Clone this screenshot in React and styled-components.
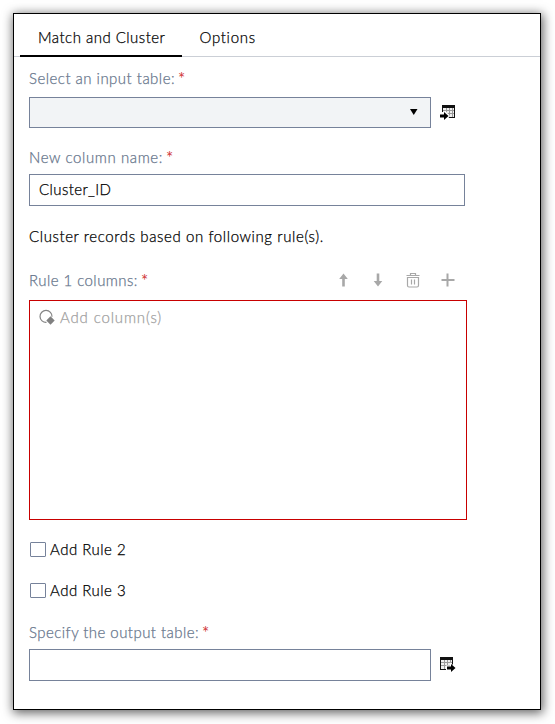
import React from "react";
import styled, { createGlobalStyle } from "styled-components";

const GlobalStyle = createGlobalStyle`
  * { box-sizing: border-box; }
  body { margin: 0; background: #fff; }
`;

const Page = styled.div`
  display: flex;
  align-items: flex-start;
  height: 724px;
  padding: 13px 0 0 13px;
  overflow: hidden;
`;

const Panel = styled.main`
  width: 528px;
  height: 697px;
  border: 1px solid #000;
  background: #fff;
  box-shadow: 1px 2px 10px 1px rgba(0, 0, 0, 0.62);
  font-family: Lato, "Open Sans", sans-serif;
  font-size: 15px;
  font-weight: 300;
  line-height: 20px;
  color: #000;
`;

const Tabs = styled.nav`
  display: flex;
  height: 43px;
  padding-left: 6px;
  box-shadow: inset 0 -1px #cbcfd6;
`;

const Tab = styled.button`
  width: ${(p) => p.$width}px;
  padding: 5px 0 0 ${(p) => p.$inset}px;
  border: 0;
  border-bottom: 2px solid ${(p) => (p.$active ? "#000" : "transparent")};
  background: none;
  font: inherit;
  color: inherit;
  text-align: left;
`;

const Form = styled.form`
  display: flex;
  flex-direction: column;
  padding: 11px 0 0 15px;
`;

const Text = styled.span`
  letter-spacing: ${(p) => p.$track || 0}px;
  white-space: nowrap;
  -webkit-text-stroke: 0.25px currentColor;
`;

const Label = styled.div`
  display: flex;
  align-items: center;
  gap: 3px;
  height: 20px;
  color: #66758b;
`;

const Star = styled.span`
  height: 20px;
  font-size: 17px;
  line-height: 22px;
  font-weight: 400;
  color: #d13a3a;
`;

const FieldRow = styled.div`
  display: flex;
  align-items: center;
  gap: 9px;
  margin: ${(p) => p.$margin};
`;

const Field = styled.div`
  display: flex;
  align-items: center;
  justify-content: ${(p) => (p.$select ? "flex-end" : "flex-start")};
  width: ${(p) => p.$width}px;
  height: ${(p) => (p.$select ? 31 : 32)}px;
  padding: 0 12px 2px 9px;
  border: 1px solid #76829a;
  background: ${(p) => (p.$select ? "#f2f4f6" : "#fff")};
`;

const Note = styled.p`
  margin: 0 0 24px;
`;

const RuleHeader = styled.div`
  display: flex;
  justify-content: space-between;
  width: 427px;
  height: 20px;
  margin-bottom: 10px;
`;

const Toolbar = styled.div`
  display: flex;
  align-items: center;
  gap: 19px;
`;

const ColumnsBox = styled.div`
  display: flex;
  align-items: flex-start;
  gap: 4px;
  width: 438px;
  height: 220px;
  padding: 6px 0 0 9px;
  margin-bottom: 19px;
  border: 1px solid #c80000;
  color: #a0a0a0;
`;

const Check = styled.label`
  display: flex;
  align-items: center;
  gap: 4px;
  height: 20px;
  padding-left: 1px;
  margin-bottom: ${(p) => p.$after}px;
`;

const Box = styled.span`
  width: 16px;
  height: 15px;
  margin-top: 1px;
  border: 1px solid #76829a;
  border-radius: 1px;
`;

const Icon = styled.svg`
  display: block;
  flex: none;
`;

const Required = ({ children, track }) => (
  <Label>
    <Text $track={track}>{children}</Text>
    <Star>*</Star>
  </Label>
);

const TableGrid = ({ x }) => (
  <g transform={`translate(${x} 0)`} shapeRendering="crispEdges">
    <path d="M0 1h13v13H0z" fill="#111" />
    <path d="M1 4h11v9H1z" fill="#eee" />
    <path d="M1 6.5h11M1 9.5h11M4.5 4v9M7.5 4v9M10.5 4v9" stroke="#999" fill="none" />
  </g>
);

const InputTableIcon = () => (
  <Icon width="16" height="16" viewBox="0 1 16 16">
    <TableGrid x={2} />
    <path d="M0 8h5V6.500l5 5.500-3 4H0z" fill="#fff" />
    <path d="M0 10.500h4V8l4.500 4-4.500 4v-2.500H0z" fill="#000" />
  </Icon>
);

const OutputTableIcon = () => (
  <Icon width="16" height="16" viewBox="0 1 16 16">
    <TableGrid x={0} />
    <path d="M6 9.500h4V6.500l5 4v4.500H6z" fill="#fff" />
    <path d="M7 10.500h4V8l4.500 4-4.500 4v-2.500H7z" fill="#000" />
  </Icon>
);

const ArrowIcon = ({ down }) => (
  <Icon width="16" height="16" viewBox="0 0 16 16">
    <path
      d="M8.500 1.500 12.800 7H9.800v7.500H7.200V7H4.200z"
      fill="#a8a8a8"
      transform={down ? "rotate(180 8.250 8)" : undefined}
    />
  </Icon>
);

const TrashIcon = () => (
  <Icon width="16" height="16" viewBox="0 0 16 16" fill="none" stroke="#a8a8a8">
    <path d="M1.500 3.500h13M5.500 3V1.500h5V3M2.500 5.500h11v8q0 1.500-1.500 1.500H4q-1.500 0-1.500-1.500zM6.500 7.500v5M9.500 7.500v5" strokeWidth="1.200" />
  </Icon>
);

const PlusIcon = () => (
  <Icon width="16" height="16" viewBox="0 0 16 16">
    <path d="M7.500 1.500v13M1.500 8h13" stroke="#a8a8a8" strokeWidth="2" />
  </Icon>
);

const ColumnIcon = () => (
  <Icon width="17" height="19" viewBox="0 -1 17 19">
    <path d="M7.500 14.400A6 6 0 1 1 13 8.800" fill="none" stroke="#858585" strokeWidth="1.200" />
    <path d="m11.500 8.300 4.200 4.200-4.200 4.200-4.200-4.200z" fill="#808080" />
  </Icon>
);

export default function App() {
  return (
    <>
      <GlobalStyle />
      <Page>
        <Panel>
          <Tabs>
            <Tab type="button" $active $width={162} $inset={18}>
              <Text $track={0.48}>Match and Cluster</Text>
            </Tab>
            <Tab type="button" $width={90} $inset={17.5}>
              <Text $track={0.7}>Options</Text>
            </Tab>
          </Tabs>
          <Form>
            <Required track={0.48}>Select an input table:</Required>
            <FieldRow $margin="9px 0 19px">
              <Field $select $width={402}>
                <Icon width="9" height="6" viewBox="0 0 9 6">
                  <path d="M1 0h7.500l-3.750 6z" fill="#000" />
                </Icon>
              </Field>
              <InputTableIcon />
            </FieldRow>
            <Required track={0.6}>New column name:</Required>
            <FieldRow $margin="7px 0 20px">
              <Field $width={436}>
                <Text $track={0.4}>Cluster_ID</Text>
              </Field>
            </FieldRow>
            <Note>
              <Text $track={0.6}>Cluster records based on following rule(s).</Text>
            </Note>
            <RuleHeader>
              <Required track={0.45}>Rule 1 columns:</Required>
              <Toolbar>
                <ArrowIcon />
                <ArrowIcon down />
                <TrashIcon />
                <PlusIcon />
              </Toolbar>
            </RuleHeader>
            <ColumnsBox>
              <ColumnIcon />
              <Text $track={0.85}>Add column(s)</Text>
            </ColumnsBox>
            <Check $after={21}>
              <Box />
              <Text $track={0.5}>Add Rule 2</Text>
            </Check>
            <Check $after={22}>
              <Box />
              <Text $track={0.5}>Add Rule 3</Text>
            </Check>
            <Required track={0.45}>Specify the output table:</Required>
            <FieldRow $margin="7px 0 0">
              <Field $width={402} />
              <OutputTableIcon />
            </FieldRow>
          </Form>
        </Panel>
      </Page>
    </>
  );
}
